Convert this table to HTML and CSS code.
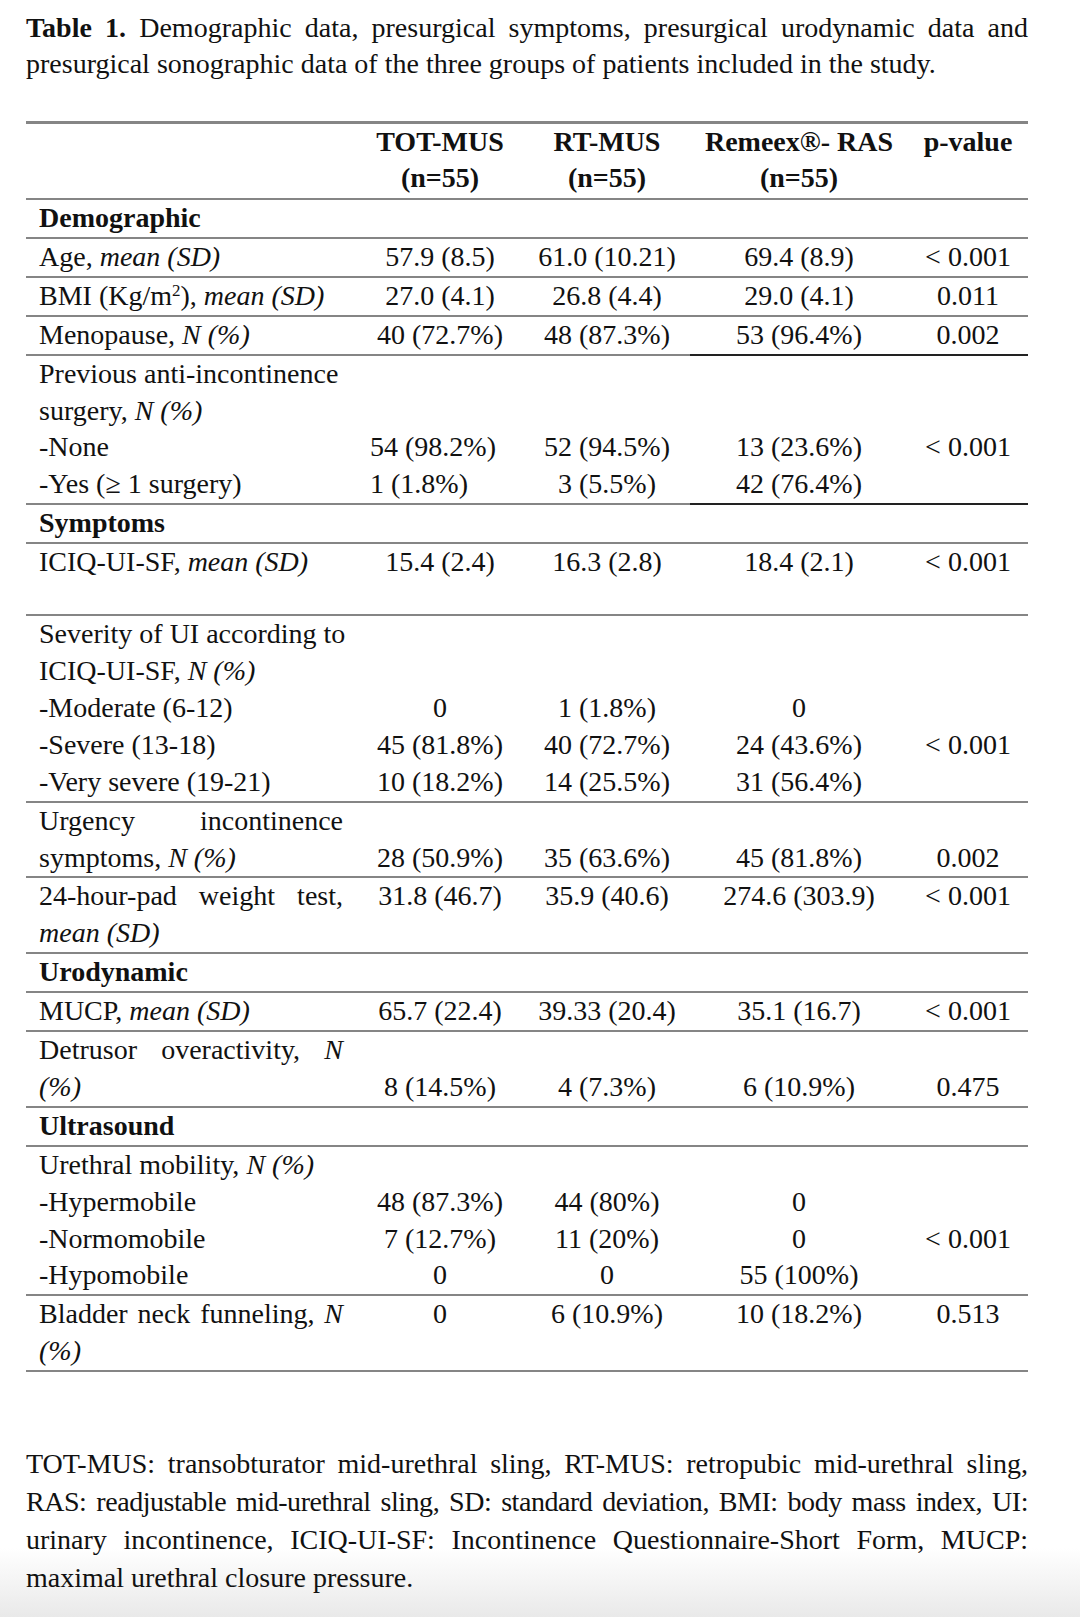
FILE: index.html
```html
<!DOCTYPE html>
<html lang="en">
<head>
<meta charset="utf-8">
<title>Table 1</title>
<link rel="stylesheet" href="styles.css">
</head>
<body>
<div class="page">
  <p class="caption"><b>Table 1.</b> Demographic data, presurgical symptoms, presurgical urodynamic data and presurgical sonographic data of the three groups of patients included in the study.</p>

  <table class="data">
    <colgroup>
      <col class="c-label">
      <col class="c-tot">
      <col class="c-rt">
      <col class="c-rem">
      <col class="c-p">
    </colgroup>
    <thead>
      <tr>
        <th></th>
        <th>TOT-MUS<br>(n=55)</th>
        <th>RT-MUS<br>(n=55)</th>
        <th>Remeex®- RAS<br>(n=55)</th>
        <th class="ptop">p-value<br>&nbsp;</th>
      </tr>
    </thead>
    <tbody>
      <tr class="section"><td colspan="5">Demographic</td></tr>
      <tr>
        <td class="label">Age, <i>mean (SD)</i></td>
        <td>57.9 (8.5)</td><td>61.0 (10.21)</td><td>69.4 (8.9)</td><td>&lt; 0.001</td>
      </tr>
      <tr>
        <td class="label">BMI (Kg/m<sup>2</sup>), <i>mean (SD)</i></td>
        <td>27.0 (4.1)</td><td>26.8 (4.4)</td><td>29.0 (4.1)</td><td>0.011</td>
      </tr>
      <tr class="split">
        <td class="label">Menopause, <i>N (%)</i></td>
        <td>40 (72.7%)</td><td>48 (87.3%)</td><td class="dark">53 (96.4%)</td><td class="dark">0.002</td>
      </tr>
      <tr class="split">
        <td class="label"><span class="ln">Previous anti-incontinence</span><span class="ln">surgery, <i>N (%)</i></span><span class="ln">-None</span><span class="ln">-Yes (≥ 1 surgery)</span></td>
        <td class="left"><br><br>54 (98.2%)<br>1 (1.8%)</td>
        <td><br><br>52 (94.5%)<br>3 (5.5%)</td>
        <td class="dark"><br><br>13 (23.6%)<br>42 (76.4%)</td>
        <td class="dark"><br><br>&lt; 0.001</td>
      </tr>
      <tr class="section"><td colspan="5">Symptoms</td></tr>
      <tr class="gap">
        <td class="label">ICIQ-UI-SF, <i>mean (SD)</i></td>
        <td>15.4 (2.4)</td><td>16.3 (2.8)</td><td>18.4 (2.1)</td><td>&lt; 0.001</td>
      </tr>
      <tr>
        <td class="label"><span class="ln">Severity of UI according to</span><span class="ln">ICIQ-UI-SF, <i>N (%)</i></span><span class="ln">-Moderate (6-12)</span><span class="ln">-Severe (13-18)</span><span class="ln">-Very severe (19-21)</span></td>
        <td><br><br>0<br>45 (81.8%)<br>10 (18.2%)</td>
        <td><br><br>1 (1.8%)<br>40 (72.7%)<br>14 (25.5%)</td>
        <td><br><br>0<br>24 (43.6%)<br>31 (56.4%)</td>
        <td><br><br><br>&lt; 0.001</td>
      </tr>
      <tr>
        <td class="label"><span class="ln jl">Urgency incontinence</span><span class="ln">symptoms, <i>N (%)</i></span></td>
        <td><br>28 (50.9%)</td><td><br>35 (63.6%)</td><td><br>45 (81.8%)</td><td><br>0.002</td>
      </tr>
      <tr>
        <td class="label"><span class="ln jl">24-hour-pad weight test,</span><span class="ln"><i>mean (SD)</i></span></td>
        <td>31.8 (46.7)</td><td>35.9 (40.6)</td><td>274.6 (303.9)</td><td>&lt; 0.001</td>
      </tr>
      <tr class="section"><td colspan="5">Urodynamic</td></tr>
      <tr>
        <td class="label">MUCP, <i>mean (SD)</i></td>
        <td>65.7 (22.4)</td><td>39.33 (20.4)</td><td>35.1 (16.7)</td><td>&lt; 0.001</td>
      </tr>
      <tr>
        <td class="label"><span class="ln jl">Detrusor overactivity, <i>N</i></span><span class="ln"><i>(%)</i></span></td>
        <td><br>8 (14.5%)</td><td><br>4 (7.3%)</td><td><br>6 (10.9%)</td><td><br>0.475</td>
      </tr>
      <tr class="section"><td colspan="5">Ultrasound</td></tr>
      <tr>
        <td class="label"><span class="ln">Urethral mobility, <i>N (%)</i></span><span class="ln">-Hypermobile</span><span class="ln">-Normomobile</span><span class="ln">-Hypomobile</span></td>
        <td><br>48 (87.3%)<br>7 (12.7%)<br>0</td>
        <td><br>44 (80%)<br>11 (20%)<br>0</td>
        <td><br>0<br>0<br>55 (100%)</td>
        <td><br><br>&lt; 0.001</td>
      </tr>
      <tr class="last">
        <td class="label"><span class="ln jl">Bladder neck funneling, <i>N</i></span><span class="ln"><i>(%)</i></span></td>
        <td>0</td><td>6 (10.9%)</td><td>10 (18.2%)</td><td>0.513</td>
      </tr>
    </tbody>
  </table>

  <p class="notes"><span class="ln jl">TOT-MUS: transobturator mid-urethral sling, RT-MUS: retropubic mid-urethral sling,</span><span class="ln jl tight">RAS: readjustable mid-urethral sling, SD: standard deviation, BMI: body mass index, UI:</span><span class="ln jl">urinary incontinence, ICIQ-UI-SF: Incontinence Questionnaire-Short Form, MUCP:</span><span class="ln">maximal urethral closure pressure.</span></p>
</div>
</body>
</html>
```

FILE: styles.css
```css
html, body {
  margin: 0;
  padding: 0;
}

body {
  min-height: 1617px;
  background: linear-gradient(to bottom, #ffffff 0px, #ffffff 1548px, #e9e9e9 1617px);
  color: #111111;
  font-family: "Liberation Serif", "Times New Roman", serif;
  font-size: 28px;
  line-height: 37px;
}

.page {
  width: 1002px;
  padding: 10px 52px 0 26px;
}

.caption {
  margin: 0;
  text-align: justify;
  line-height: 36px;
}

.caption b {
  font-weight: bold;
}

.data {
  width: 1002px;
  margin-top: 39px;
  border-collapse: collapse;
  table-layout: fixed;
  border-top: 3px solid #858585;
}

.c-label { width: 330px; }
.c-tot { width: 168px; }
.c-rt { width: 166px; }
.c-rem { width: 218px; }
.c-p { width: 120px; }

.data th {
  font-weight: bold;
  text-align: center;
  vertical-align: top;
  padding: 0 0 2px 0;
  line-height: 36px;
  border-bottom: 2px solid #858585;
}

.data td {
  padding: 0;
  text-align: center;
  vertical-align: top;
  line-height: 36.9px;
  border-bottom: 2px solid #858585;
}

.data td.label {
  text-align: left;
  padding: 0 13px;
}

.data tr.section td {
  text-align: left;
  font-weight: bold;
  padding: 0 13px;
}

.data tr.gap td {
  padding-bottom: 33px;
}

.data tr.gap td.label {
  padding-bottom: 33px;
}

.data td.left {
  text-align: left;
  padding-left: 14px;
}

.data td.dark {
  border-bottom: 2px solid #222222;
}

.ln {
  display: block;
  white-space: nowrap;
}

.jl {
  text-align: justify;
  text-align-last: justify;
}

.tight {
  letter-spacing: -0.45px;
  word-spacing: -3px;
}

sup {
  font-size: 17px;
  line-height: 0;
  vertical-align: 9px;
}

.notes {
  margin: 73px 0 0 0;
  line-height: 38px;
}
```
